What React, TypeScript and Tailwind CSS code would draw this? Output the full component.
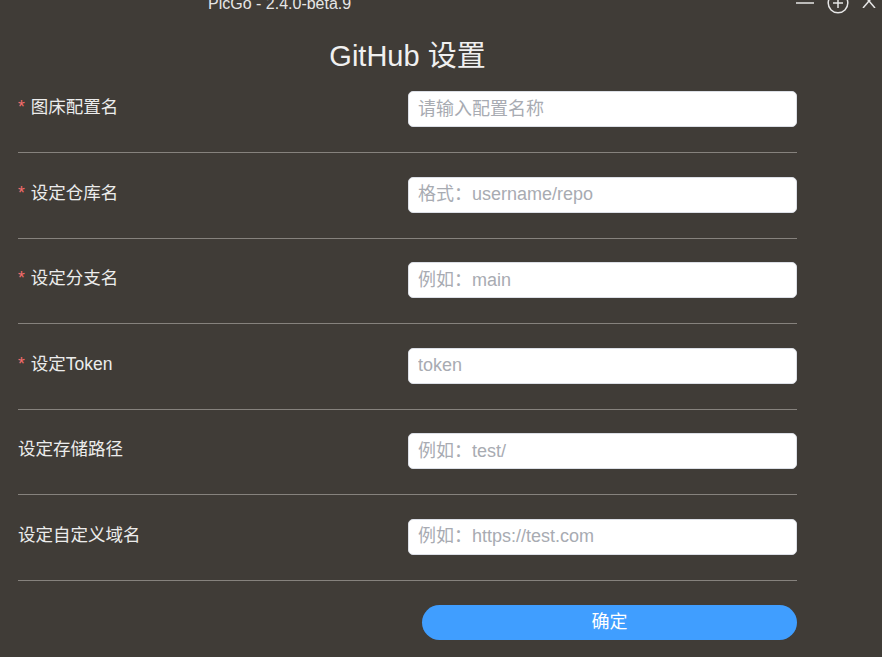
import React from "react";

const fields = [
  { label: "图床配置名", placeholder: "请输入配置名称", required: true },
  { label: "设定仓库名", placeholder: "格式：username/repo", required: true },
  { label: "设定分支名", placeholder: "例如：main", required: true },
  { label: "设定Token", placeholder: "token", required: true },
  { label: "设定存储路径", placeholder: "例如：test/", required: false },
  { label: "设定自定义域名", placeholder: "例如：https://test.com", required: false },
];

const font = { fontFamily: '"Liberation Sans", "Noto Sans CJK SC", sans-serif' };

export default function App() {
  return (
    <div
      className="w-[882px] h-[657px] overflow-hidden bg-[#403c37] text-[#ececec] flex flex-col"
      style={font}
    >
      {/* Title bar */}
      <div className="h-[22px] flex items-start justify-between shrink-0">
        <span className="ml-[208px] -mt-[4px] text-[16px] leading-[16px] text-[#e6e6e6]">
          PicGo - 2.4.0-beta.9
        </span>
        <div className="flex items-start gap-[12px] mr-[5px] -mt-[8px]">
          <svg width="20" height="20" viewBox="0 0 20 20">
            <line x1="1" y1="11" x2="19" y2="11" stroke="#e6e6e6" strokeWidth="1.5" />
          </svg>
          <svg width="22" height="22" viewBox="0 0 22 22">
            <circle cx="11" cy="11" r="9.8" fill="none" stroke="#e6e6e6" strokeWidth="1.5" />
            <line x1="6" y1="11" x2="16" y2="11" stroke="#e6e6e6" strokeWidth="1.5" />
            <line x1="11" y1="6" x2="11" y2="16" stroke="#e6e6e6" strokeWidth="1.5" />
          </svg>
          <svg width="16" height="16" viewBox="0 0 16 16">
            <line x1="2" y1="2" x2="14" y2="16" stroke="#e6e6e6" strokeWidth="1.5" />
            <line x1="14" y1="2" x2="2" y2="16" stroke="#e6e6e6" strokeWidth="1.5" />
          </svg>
        </div>
      </div>

      {/* Content */}
      <div className="ml-[18px] w-[779px] flex flex-col">
        <h1 className="mt-[20px] text-center text-[29px] leading-[28px] font-normal text-[#f0f0f0]">
          GitHub 设置
        </h1>

        <div className="flex flex-col mt-[21px]">
          {fields.map((f, i) => (
            <div
              key={f.label}
              className={
                "flex items-start pb-[25px] border-b border-[#86827d] " +
                (i === 0 ? "pt-0" : "pt-[23.5px]")
              }
            >
              <div className="w-[390px] mt-[4px] text-[17.5px] leading-[24px] text-[#ececec]">
                {f.required && <span className="text-[#f56c6c] mr-[6px]">*</span>}
                {f.label}
              </div>
              <input
                className="flex-1 h-[36px] rounded-[5px] border border-[#dcdfe6] bg-white px-[9px] text-[18px] text-[#606266] placeholder:text-[#a8abb2] outline-none"
                placeholder={f.placeholder}
                style={font}
              />
            </div>
          ))}
        </div>

        <div className="flex justify-end pt-[24px]">
          <button
            className="w-[375px] h-[35px] rounded-full bg-[#409eff] text-white text-[18px] leading-[35px]"
            style={font}
          >
            确定
          </button>
        </div>
      </div>
    </div>
  );
}
